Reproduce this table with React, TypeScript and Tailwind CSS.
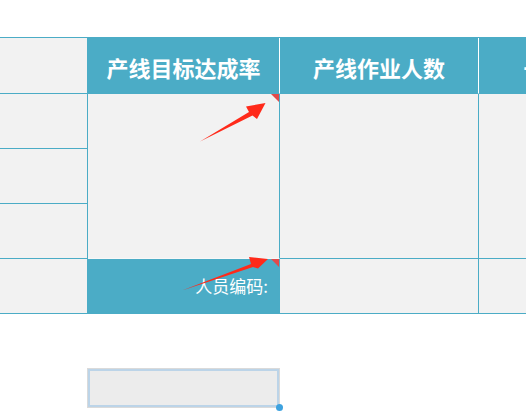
import React from "react";

const blue = "bg-[#4bacc6]";

function Corner() {
  return (
    <span className="absolute top-0 right-0 w-0 h-0 border-t-[8px] border-t-[#e24a4a] border-l-[8px] border-l-transparent" />
  );
}

export default function App() {
  return (
    <div className="relative w-[526px] h-[417px] overflow-hidden bg-white font-['Noto_Sans_CJK_SC','Noto_Sans',sans-serif]">
      <div className="pt-[37px]">
        <div className="grid w-max grid-cols-[88px_192px_199px_199px] grid-rows-[56px_55px_55px_55px_55px] border-t border-[#4bacc6]">
          {/* header */}
          <div className="bg-[#f2f2f2] border-r border-b border-[#4bacc6]" />
          <div className={`${blue} border-r border-r-white border-b border-b-[#4bacc6] flex items-center justify-center pt-[3px] text-[22px] font-bold text-white`}>
            产线目标达成率
          </div>
          <div className={`${blue} border-r border-r-white border-b border-b-[#4bacc6] flex items-center justify-center pt-[3px] text-[22px] font-bold text-white`}>
            产线作业人数
          </div>
          <div className={`${blue} border-b border-b-[#4bacc6] flex items-center justify-center pt-[3px] text-[22px] font-bold text-white whitespace-nowrap`}>
            一次合格率
          </div>

          {/* body */}
          <div className="col-start-1 row-start-2 bg-[#f2f2f2] border-r border-b border-[#4bacc6]" />
          <div className="col-start-1 row-start-3 bg-[#f2f2f2] border-r border-b border-[#4bacc6]" />
          <div className="col-start-1 row-start-4 bg-[#f2f2f2] border-r border-b border-[#4bacc6]" />
          <div className="col-start-1 row-start-5 bg-[#f2f2f2] border-r border-b border-[#4bacc6]" />

          <div className="relative col-start-2 row-start-2 row-span-3 bg-[#f2f2f2] border-r border-r-[#4bacc6] border-b border-b-[#f8f8f8]">
            <Corner />
          </div>
          <div className="col-start-3 row-start-2 row-span-3 bg-[#f2f2f2] border-r border-b border-[#4bacc6]" />
          <div className="col-start-4 row-start-2 row-span-3 bg-[#f2f2f2] border-b border-[#4bacc6]" />

          <div className={`relative col-start-2 row-start-5 ${blue} border-r border-b border-[#4bacc6] flex items-center justify-end pr-[11px] text-[17px] text-white`}>
            <Corner />
            人员编码:
          </div>
          <div className="col-start-3 row-start-5 bg-[#f2f2f2] border-r border-b border-[#4bacc6]" />
          <div className="col-start-4 row-start-5 bg-[#f2f2f2] border-b border-[#4bacc6]" />
        </div>

        <div className="relative ml-[87px] mt-[54px] w-[193px] h-[40px] border border-[#dadada]">
          <div className="h-full border-2 border-[#bcd4e8] bg-[#ececec]" />
          <span className="absolute -right-[4px] -bottom-[4px] w-[7px] h-[7px] rounded-full bg-[#3ea2df]" />
        </div>
      </div>

      {/* annotation arrows */}
      <svg className="absolute inset-0 pointer-events-none" width="526" height="417" viewBox="0 0 526 417">
        <polygon
          fill="#ff2a1a"
          points="200,141.5 249,112 246,106.5 265.5,103 257,119 252.5,115.5"
        />
        <polygon
          fill="#ff2a1a"
          points="182,290.5 251,264 249,257 268,259 258,268.5 253,267"
        />
      </svg>
    </div>
  );
}
